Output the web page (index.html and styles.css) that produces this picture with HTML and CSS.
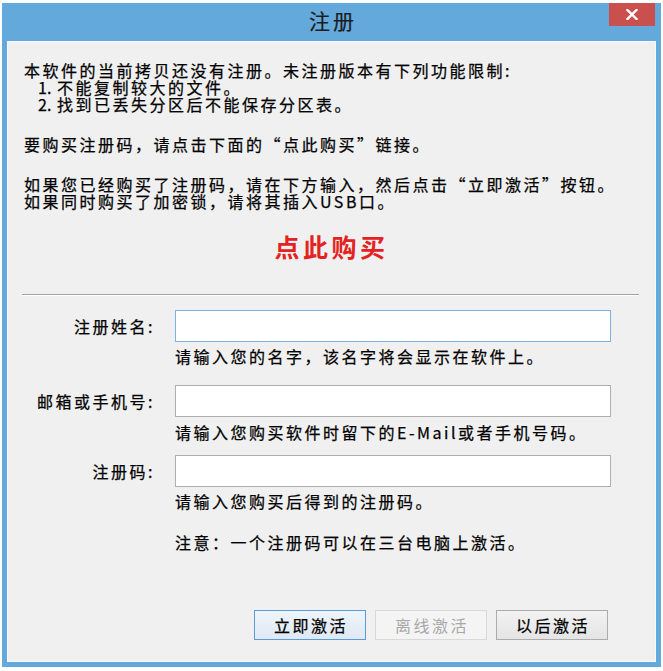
FILE: index.html
```html
<!DOCTYPE html>
<html lang="zh-CN">
<head>
<meta charset="utf-8">
<title>注册</title>
<link rel="stylesheet" href="styles.css">
</head>
<body>
<div class="window">
  <div class="titlebar">
    <span class="title">注册</span>
    <button class="close" aria-label="关闭">
      <svg width="12" height="11" viewBox="0 0 12 11"><path d="M1.5 1 L10.5 10 M10.5 1 L1.5 10" stroke="#fff" stroke-width="2.4" stroke-linecap="square"/></svg>
    </button>
  </div>
  <div class="content">
    <p class="text">本软件的当前拷贝还没有注册。未注册版本有下列功能限制:</p>
    <ol class="limits">
      <li><span class="num">1.</span><span>不能复制较大的文件。</span></li>
      <li><span class="num">2.</span><span>找到已丢失分区后不能保存分区表。</span></li>
    </ol>
    <p class="text gap">要购买注册码，请点击下面的“点此购买”链接。</p>
    <p class="text gap">如果您已经购买了注册码，请在下方输入，然后点击“立即激活”按钮。<br>如果同时购买了加密锁，请将其插入USB口。</p>
    <div class="buy-wrap"><a class="buy" href="#">点此购买</a></div>
    <div class="sep"></div>
    <div class="form">
      <label class="label row1">注册姓名:</label>
      <input class="field focused row1" type="text">
      <p class="hint h1">请输入您的名字，该名字将会显示在软件上。</p>
      <label class="label row2">邮箱或手机号:</label>
      <input class="field row2" type="text">
      <p class="hint h2">请输入您购买软件时留下的E-Mail或者手机号码。</p>
      <label class="label row3">注册码:</label>
      <input class="field row3" type="text">
      <p class="hint h3">请输入您购买后得到的注册码。</p>
      <p class="hint note">注意：一个注册码可以在三台电脑上激活。</p>
    </div>
    <div class="buttons">
      <button class="btn primary">立即激活</button>
      <button class="btn" disabled>离线激活</button>
      <button class="btn">以后激活</button>
    </div>
  </div>
</div>
</body>
</html>
```

FILE: styles.css
```css
html, body {
  margin: 0;
  padding: 0;
  background: #ffffff;
}
body {
  font-family: "Noto Sans CJK SC", "Noto Sans", sans-serif;
  color: #000;
}
.window {
  margin: 3px 0 0 2px;
  width: 659px;
  height: 664px;
  box-sizing: border-box;
  background: #63a9dc;
  padding: 0 5px 5px 5px;
  display: flex;
  flex-direction: column;
}
.titlebar {
  position: relative;
  height: 38px;
  padding-top: 2px;
  box-sizing: border-box;
  text-align: center;
}
.title {
  font-size: 21px;
  line-height: 30px;
  letter-spacing: 3px;
  color: #1c1c1c;
  padding-left: 3px;
  -webkit-text-stroke: 0.2px #1c1c1c;
}
.close {
  position: absolute;
  top: 0;
  right: 1px;
  width: 46px;
  height: 23px;
  border: none;
  padding: 0;
  background: #c9504d;
  display: flex;
  align-items: center;
  justify-content: center;
}
.content {
  flex: 1;
  background: #f0f0f0;
  border: 1px solid #f8f8f8;
  padding: 20px 16px 0 16px;
  font-size: 16px;
  letter-spacing: 2.5px;
  line-height: 17px;
  -webkit-text-stroke: 0.25px #000;
}
.text {
  margin: 0;
}
.gap {
  margin-top: 23px;
}
.limits {
  list-style: none;
  margin: 0;
  padding: 0 0 0 14px;
}
.limits li {
  display: flex;
}
.num {
  width: 19px;
  letter-spacing: 0;
}
.buy-wrap {
  margin-top: 21px;
  text-align: center;
  line-height: 30px;
}
.buy {
  color: #e42222;
  font-size: 25px;
  font-weight: bold;
  letter-spacing: 3.5px;
  text-decoration: none;
  -webkit-text-stroke: 0;
}
.sep {
  margin: 29px 0 0 -2px;
  height: 0;
  border-top: 1px solid #a3a3a3;
  border-bottom: 1px solid #ffffff;
}
.form {
  display: grid;
  grid-template-columns: 131px 436px;
  column-gap: 20px;
  align-items: center;
}
.label {
  grid-column: 1;
  text-align: right;
}
.field {
  grid-column: 2;
  height: 32px;
  box-sizing: border-box;
  border: 1px solid #aeaeae;
  background: #fff;
  margin: 0;
  outline: none;
}
.field.focused {
  border-color: #7cb2e6;
}
.row1 { margin-top: 14px; }
.row2 { margin-top: 20px; }
.row3 { margin-top: 14px; }
.hint {
  grid-column: 2;
  margin: 6px 0 0 0;
}
.h2 { margin-top: 7px; }
.note { margin-top: 24px; }
.buttons {
  display: flex;
  justify-content: flex-end;
  gap: 9px;
  margin: 59px 31px 0 0;
}
.btn {
  width: 112px;
  height: 30px;
  box-sizing: border-box;
  border: 1px solid #acacac;
  background: linear-gradient(#f2f2f2, #e4e4e4);
  font-family: "Noto Sans CJK SC", sans-serif;
  font-size: 16px;
  letter-spacing: 2.5px;
  color: #000;
  padding: 0 0 0 2px;
}
.btn.primary {
  border-color: #5a9bd8;
  background: linear-gradient(#edf4fb, #dfe9f4);
}
.btn:disabled {
  border-color: #d9d9d9;
  background: #f4f4f4;
  color: #a8a8a8;
  -webkit-text-stroke: 0;
}
```
